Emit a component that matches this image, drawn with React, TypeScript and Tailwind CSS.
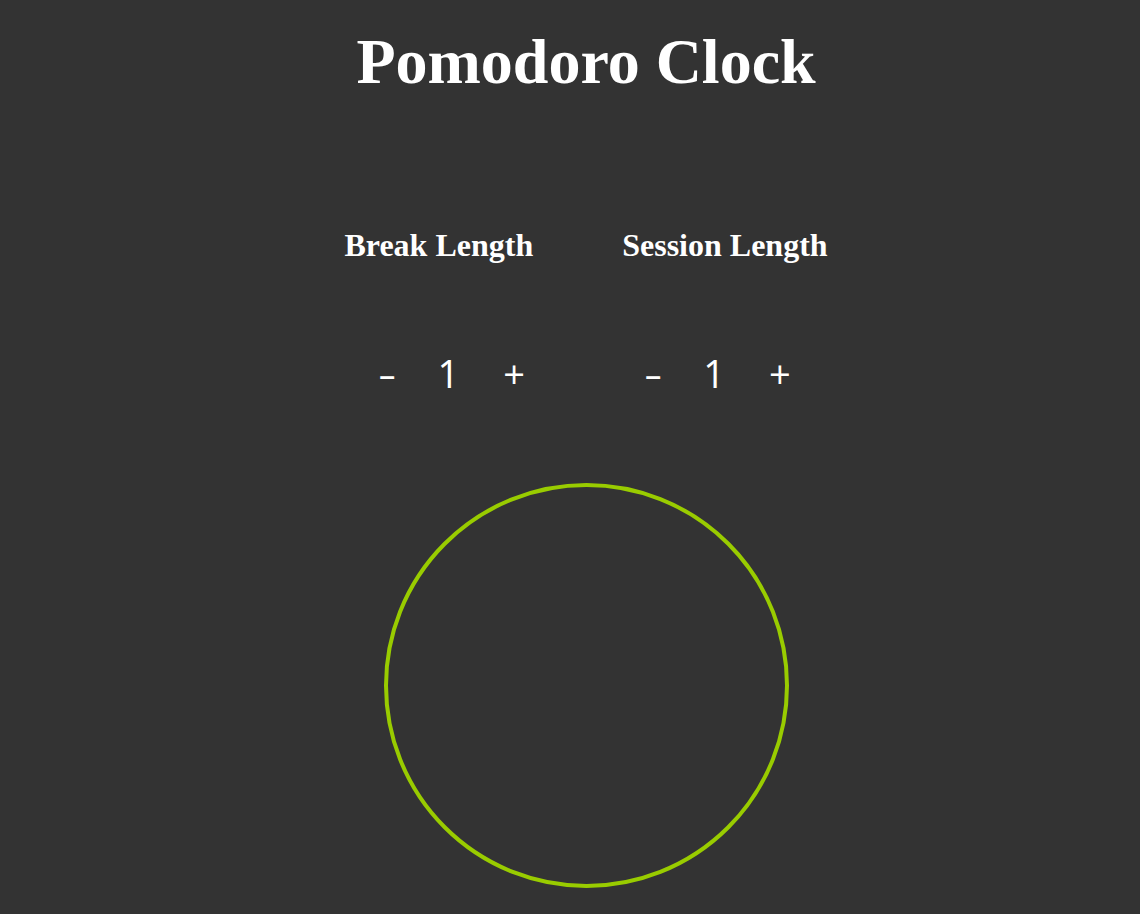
export default function App() {
  return (
    <div className="min-h-[914px] bg-[#333333] pl-8 text-white">
      <h1 className="pt-[26px] text-center font-['Liberation_Serif',serif] text-[64px] font-bold leading-[72px]">
        Pomodoro Clock
      </h1>

      <div className="mt-[129px] flex justify-center gap-[89px] font-['Liberation_Serif',serif] text-[32px] font-bold leading-[36px]">
        <h2>Break Length</h2>
        <h2>Session Length</h2>
      </div>

      <div className="mt-[88px] flex justify-center gap-[122px]">
        <Stepper value={1} />
        <Stepper value={1} />
      </div>

      <div className="mt-[88px] flex justify-center">
        <div className="h-[405px] w-[405px] rounded-full border-4 border-[#99cc00]" />
      </div>
    </div>
  )
}

function Stepper({ value }: { value: number }) {
  return (
    <div className="flex items-center gap-[44px] font-['Open_Sans',sans-serif] text-[38px] leading-[44px]">
      <button className="scale-x-150">-</button>
      <span>{value}</span>
      <button>+</button>
    </div>
  )
}
